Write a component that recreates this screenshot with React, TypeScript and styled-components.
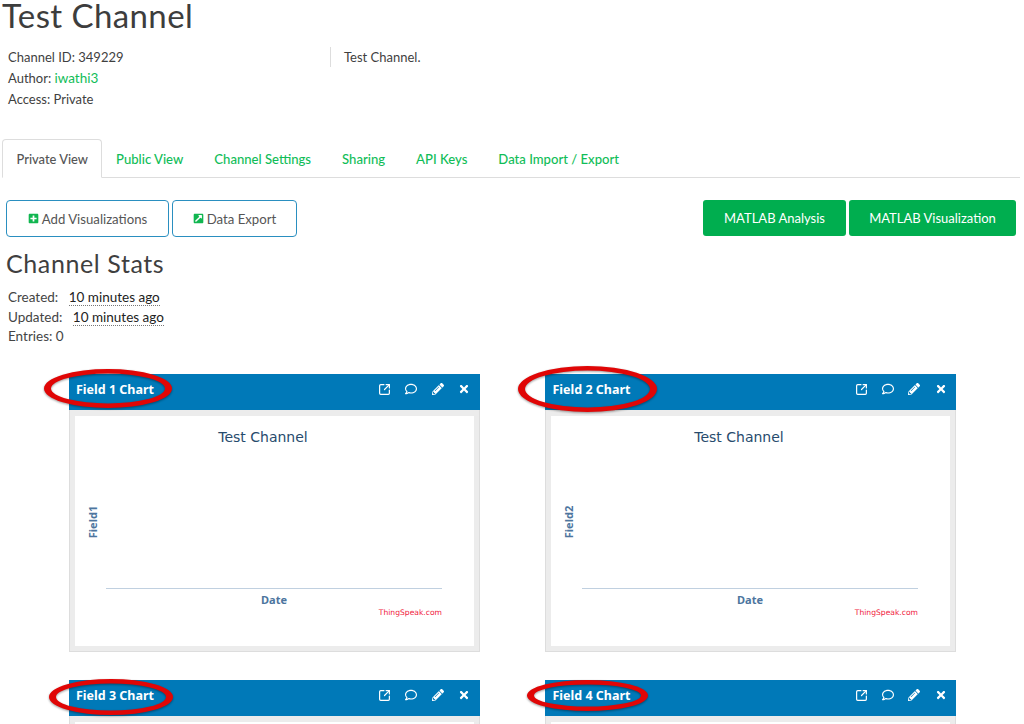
import React from "react";
import styled, { createGlobalStyle } from "styled-components";
import { FaPlusSquare, FaExternalLinkSquareAlt, FaRegComment, FaPencilAlt, FaTimes } from "react-icons/fa";
import { SquareArrowOutUpRight } from "lucide-react";

const Global = createGlobalStyle`
  html, body { margin: 0; padding: 0; background: #fff; }
  body { font-family: "Lato", "Liberation Sans", sans-serif; color: #444; overflow: hidden; height: 724px; }
`;
const Page = styled.div`
  width: 1024px; height: 724px; overflow: hidden; box-sizing: border-box;
`;
const Title = styled.h1`
  margin: 0; padding: 0 0 0 2px; height: 47px; font: 400 33px/30px "Lato", sans-serif; color: #3d3d3d; letter-spacing: 0.4px;
`;
const Meta = styled.div`
  display: flex; padding: 0 0 0 8px; height: 92px; font-size: 13px; line-height: 21px; color: #3f3f3f;
`;
const MetaLeft = styled.div`
  width: 322px;
`;
const MetaRight = styled.div`
  height: 20px; border-left: 1px solid #ddd; padding-left: 13px;
`;
const Green = styled.a`
  color: #11bd58; font-size: 13.5px;
`;
const Tabs = styled.div`
  display: flex; margin: 0 4px 0 2px; border-bottom: 1px solid #ddd; height: 38px; font-size: 13.1px; font-weight: 500;
`;
const Tab = styled.div<{ $active?: boolean }>`
  box-sizing: border-box; height: 39px;
  padding: 11px ${p => (p.$active ? "12.5px" : "15.5px")} 0 13.5px;
  font-size: ${p => (p.$active ? "12.9px" : "13.1px")};
  border: 1px solid ${p => (p.$active ? "#ddd" : "transparent")};
  border-bottom-color: ${p => (p.$active ? "#fff" : "transparent")};
  border-radius: 4px 4px 0 0;
  background: ${p => (p.$active ? "#fff" : "transparent")};
  color: ${p => (p.$active ? "#555" : "#11bd58")};
`;
const Toolbar = styled.div`
  display: flex; justify-content: space-between; margin: 22px 8px 0 6px; height: 37px;
`;
const BtnGroup = styled.div`
  display: flex; gap: 3px;
`;
const OutlineBtn = styled.div<{ $w: number }>`
  box-sizing: border-box; width: ${p => p.$w}px; height: 37px; border: 1px solid #2a8fc0; border-radius: 4px;
  display: flex; align-items: center; justify-content: center; gap: 3px; font-size: 13.2px; color: #555;
  svg { color: #11b650; width: 11px; height: 11px; }
`;
const SolidBtn = styled.div<{ $w: number }>`
  box-sizing: border-box; width: ${p => p.$w}px; height: 36px; background: #00ae4f; border-radius: 3px;
  display: flex; align-items: center; justify-content: center; font-size: 13px; color: #fff;
`;
const Heading = styled.h2`
  margin: 12px 0 0 6px; font: 400 25px/28px "Lato", sans-serif; color: #3f3f3f; letter-spacing: 0.6px;
`;
const Stats = styled.div`
  margin: 11px 0 0 8px; font-size: 13.5px; line-height: 19.5px; color: #444;
`;
const Ago = styled.span`
  margin-left: 7px; color: #222; border-bottom: 1px dotted #777;
`;
const Grid = styled.div`
  display: grid; grid-template-columns: 411px 411px; column-gap: 65.45px; row-gap: 28px; margin: 27px 0 0 69px;
`;
const Card = styled.div`
  position: relative; box-sizing: border-box; width: 411px; height: 278px; background: #ececec; border: 1px solid #ddd; border-top: 0;
`;
const CardHead = styled.div`
  box-sizing: border-box; height: 36px; margin: 0 -1px; background: #0079b8; color: #fff; display: flex; align-items: center;
  padding: 0 0 4px 7px; font: 700 12.5px "Noto Sans", sans-serif;
`;
const HeadTitle = styled.span`
  flex: 1;
`;
const IconSlot = styled.span`
  width: 26.5px; display: flex; justify-content: center; svg { width: 12px; height: 12px; display: block; }
`;
const LinkSlot = styled(IconSlot)`
  svg { width: 13px; height: 13px; }
`;
const Icons = styled.div`
  display: flex; padding-right: 2.5px; color: #fff;
`;
const ChartBox = styled.div`
  margin: 6px 5px 0 5px; height: 230px; background: #fff; svg { display: block; }
`;
const Ring = styled.svg<{ $l: number; $t: number }>`
  position: absolute; left: ${p => p.$l}px; top: ${p => p.$t}px; overflow: visible; pointer-events: none;
  filter: drop-shadow(0 1px 1px rgba(0, 0, 0, 0.4));
`;

const Chart = ({ field }: { field: number }) => (
  <svg width="400" height="230" viewBox="0 0 400 230" fontFamily="'DejaVu Sans', sans-serif">
    <text x="188" y="26" fontSize="14" fill="#274b6d" textAnchor="middle">Test Channel</text>
    <text x="0" y="0" fontSize="11" fontWeight="700" fontFamily="'Noto Sans', sans-serif" fill="#4d759e" textAnchor="middle" transform="translate(22 106) rotate(-90)">{`Field${field}`}</text>
    <line x1="31" x2="367" y1="172.5" y2="172.5" stroke="#c0d0e0" />
    <text x="199" y="188" fontSize="11" fontWeight="700" fontFamily="'Noto Sans', sans-serif" fill="#4d759e" textAnchor="middle">Date</text>
    <text x="367" y="199" fontSize="7.6" fill="#f0203c" textAnchor="end">ThingSpeak.com</text>
  </svg>
);

const rings = [
  { l: -26, t: -5, w: 128, h: 39 },
  { l: -28, t: -8, w: 139, h: 46 },
  { l: -21, t: -1, w: 124, h: 36 },
  { l: -19, t: 0, w: 121, h: 31 },
];

/* outer and inner ellipse: the brush stroke is fatter at its ends than along its top and bottom */
const ringPath = (w: number, h: number) => {
  const cx = w / 2, cy = h / 2;
  const oval = (rx: number, ry: number) =>
    `M${cx - rx} ${cy}a${rx} ${ry} 0 1 0 ${2 * rx} 0a${rx} ${ry} 0 1 0 ${-2 * rx} 0Z`;
  return oval(cx, cy) + oval(cx - 7, cy - 4.5);
};

const FieldCard = ({ n }: { n: number }) => {
  const r = rings[n - 1];
  return (
    <Card>
      <CardHead>
        <HeadTitle>{`Field ${n} Chart`}</HeadTitle>
        <Icons>
          <LinkSlot><SquareArrowOutUpRight strokeWidth={2.2} /></LinkSlot>
          <IconSlot><FaRegComment /></IconSlot>
          <IconSlot><FaPencilAlt /></IconSlot>
          <IconSlot><FaTimes /></IconSlot>
        </Icons>
      </CardHead>
      <ChartBox><Chart field={n} /></ChartBox>
      <Ring $l={r.l} $t={r.t} width={r.w} height={r.h}>
        <path d={ringPath(r.w, r.h)} fillRule="evenodd" fill="#e00606" />
      </Ring>
    </Card>
  );
};

export default function App() {
  return (
    <Page>
      <Global />
      <Title>Test Channel</Title>
      <Meta>
        <MetaLeft>
          <div>Channel ID: 349229</div>
          <div>Author: <Green>iwathi3</Green></div>
          <div>Access: Private</div>
        </MetaLeft>
        <MetaRight>Test Channel.</MetaRight>
      </Meta>
      <Tabs>
        <Tab $active>Private View</Tab>
        <Tab>Public View</Tab>
        <Tab>Channel Settings</Tab>
        <Tab>Sharing</Tab>
        <Tab>API Keys</Tab>
        <Tab>Data Import / Export</Tab>
      </Tabs>
      <Toolbar>
        <BtnGroup>
          <OutlineBtn $w={163}><FaPlusSquare />Add Visualizations</OutlineBtn>
          <OutlineBtn $w={125}><FaExternalLinkSquareAlt />Data Export</OutlineBtn>
        </BtnGroup>
        <BtnGroup>
          <SolidBtn $w={143}>MATLAB Analysis</SolidBtn>
          <SolidBtn $w={167}>MATLAB Visualization</SolidBtn>
        </BtnGroup>
      </Toolbar>
      <Heading>Channel Stats</Heading>
      <Stats>
        <div>Created: <Ago>10 minutes ago</Ago></div>
        <div>Updated: <Ago>10 minutes ago</Ago></div>
        <div>Entries: 0</div>
      </Stats>
      <Grid>
        {[1, 2, 3, 4].map(n => <FieldCard key={n} n={n} />)}
      </Grid>
    </Page>
  );
}
